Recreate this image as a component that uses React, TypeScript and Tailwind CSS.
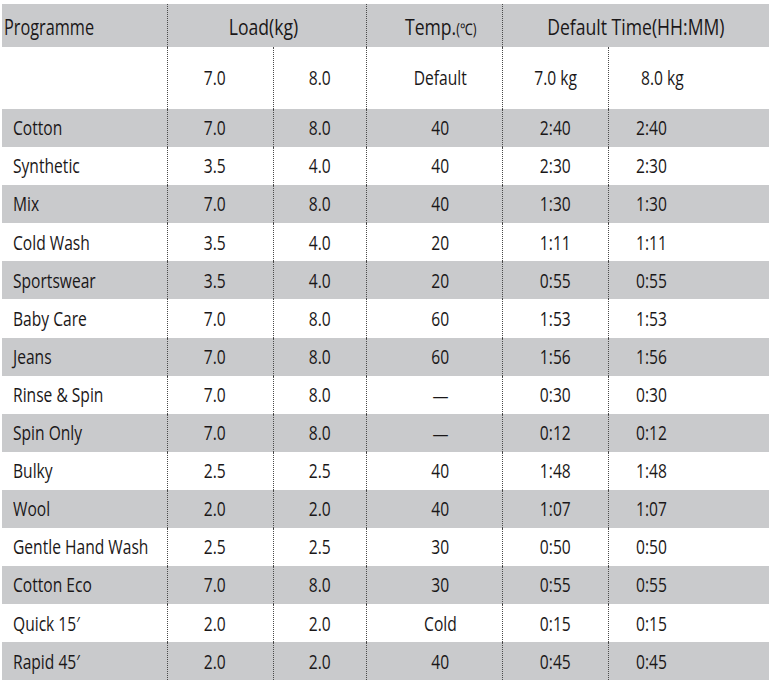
import React from 'react';

interface Row {
  name: string;
  load7: string;
  load8: string;
  temp: string;
  time7: string;
  time8: string;
}

const rows: Row[] = [
  { name: 'Cotton', load7: '7.0', load8: '8.0', temp: '40', time7: '2:40', time8: '2:40' },
  { name: 'Synthetic', load7: '3.5', load8: '4.0', temp: '40', time7: '2:30', time8: '2:30' },
  { name: 'Mix', load7: '7.0', load8: '8.0', temp: '40', time7: '1:30', time8: '1:30' },
  { name: 'Cold Wash', load7: '3.5', load8: '4.0', temp: '20', time7: '1:11', time8: '1:11' },
  { name: 'Sportswear', load7: '3.5', load8: '4.0', temp: '20', time7: '0:55', time8: '0:55' },
  { name: 'Baby Care', load7: '7.0', load8: '8.0', temp: '60', time7: '1:53', time8: '1:53' },
  { name: 'Jeans', load7: '7.0', load8: '8.0', temp: '60', time7: '1:56', time8: '1:56' },
  { name: 'Rinse & Spin', load7: '7.0', load8: '8.0', temp: '—', time7: '0:30', time8: '0:30' },
  { name: 'Spin Only', load7: '7.0', load8: '8.0', temp: '—', time7: '0:12', time8: '0:12' },
  { name: 'Bulky', load7: '2.5', load8: '2.5', temp: '40', time7: '1:48', time8: '1:48' },
  { name: 'Wool', load7: '2.0', load8: '2.0', temp: '40', time7: '1:07', time8: '1:07' },
  { name: 'Gentle Hand Wash', load7: '2.5', load8: '2.5', temp: '30', time7: '0:50', time8: '0:50' },
  { name: 'Cotton Eco', load7: '7.0', load8: '8.0', temp: '30', time7: '0:55', time8: '0:55' },
  { name: 'Quick 15′', load7: '2.0', load8: '2.0', temp: 'Cold', time7: '0:15', time8: '0:15' },
  { name: 'Rapid 45′', load7: '2.0', load8: '2.0', temp: '40', time7: '0:45', time8: '0:45' },
];

const grid = 'grid grid-cols-[165px_106px_93px_136px_106px_161px]';
const line = 'border-l border-dotted border-[#4a4a4a]';

// condensed look: the print font is narrow, so squeeze the glyphs
function T({ children, left }: { children: React.ReactNode; left?: boolean }) {
  return (
    <span className={`inline-block whitespace-nowrap scale-x-[0.8] ${left ? 'origin-left' : 'origin-center'}`}>
      {children}
    </span>
  );
}

export default function App() {
  return (
    <div className="min-h-[688px] bg-white pt-[4px] pl-[2px] text-[#1a1718] [font-family:'Open_Sans',sans-serif]">
      <div className="w-[767px]">
        {/* Header */}
        <div className={`${grid} h-[43px] bg-[#c9cacc] text-[22px] leading-none`}>
          <div className="pl-[2px] h-full flex items-center">
            <span className="inline-block whitespace-nowrap scale-x-[0.74] origin-left">Programme</span>
          </div>
          <div className={`col-span-2 h-full flex items-center justify-center pr-[8px] ${line}`}>
            <T>Load(kg)</T>
          </div>
          <div className={`h-full flex items-center justify-center pl-[12px] ${line}`}>
            <T>
              Temp.<span className="text-[16px]">(℃)</span>
            </T>
          </div>
          <div className={`col-span-2 h-full flex items-center justify-center ${line}`}>
            <T>Default Time(HH:MM)</T>
          </div>
        </div>

        {/* Sub header */}
        <div className={`${grid} h-[62px] bg-white text-[19.5px] leading-none`}>
          <div className="h-full" />
          <div className={`h-full flex items-center justify-center pr-[12px] ${line}`}><T>7.0</T></div>
          <div className={`h-full flex items-center justify-center ${line}`}><T>8.0</T></div>
          <div className={`h-full flex items-center justify-center pl-[12px] ${line}`}><T>Default</T></div>
          <div className={`h-full flex items-center justify-center ${line}`}><T>7.0 kg</T></div>
          <div className={`h-full flex items-center pl-[32px] ${line}`}><T left>8.0 kg</T></div>
        </div>

        {/* Rows */}
        {rows.map((r, i) => (
          <div
            key={r.name}
            className={`${grid} h-[38.1px] text-[19.5px] leading-none ${i % 2 === 0 ? 'bg-[#c9cacc]' : 'bg-white'}`}
          >
            <div className="h-full flex items-center pl-[11px]"><T left>{r.name}</T></div>
            <div className={`h-full flex items-center justify-center pr-[12px] ${line}`}><T>{r.load7}</T></div>
            <div className={`h-full flex items-center justify-center ${line}`}><T>{r.load8}</T></div>
            <div className={`h-full flex items-center justify-center pl-[12px] ${line}`}>
              {r.temp === '—' ? <span className="text-[16px] pt-[2px]">—</span> : <T>{r.temp}</T>}
            </div>
            <div className={`h-full flex items-center justify-center ${line}`}><T>{r.time7}</T></div>
            <div className={`h-full flex items-center pl-[27px] ${line}`}><T left>{r.time8}</T></div>
          </div>
        ))}
      </div>
    </div>
  );
}
